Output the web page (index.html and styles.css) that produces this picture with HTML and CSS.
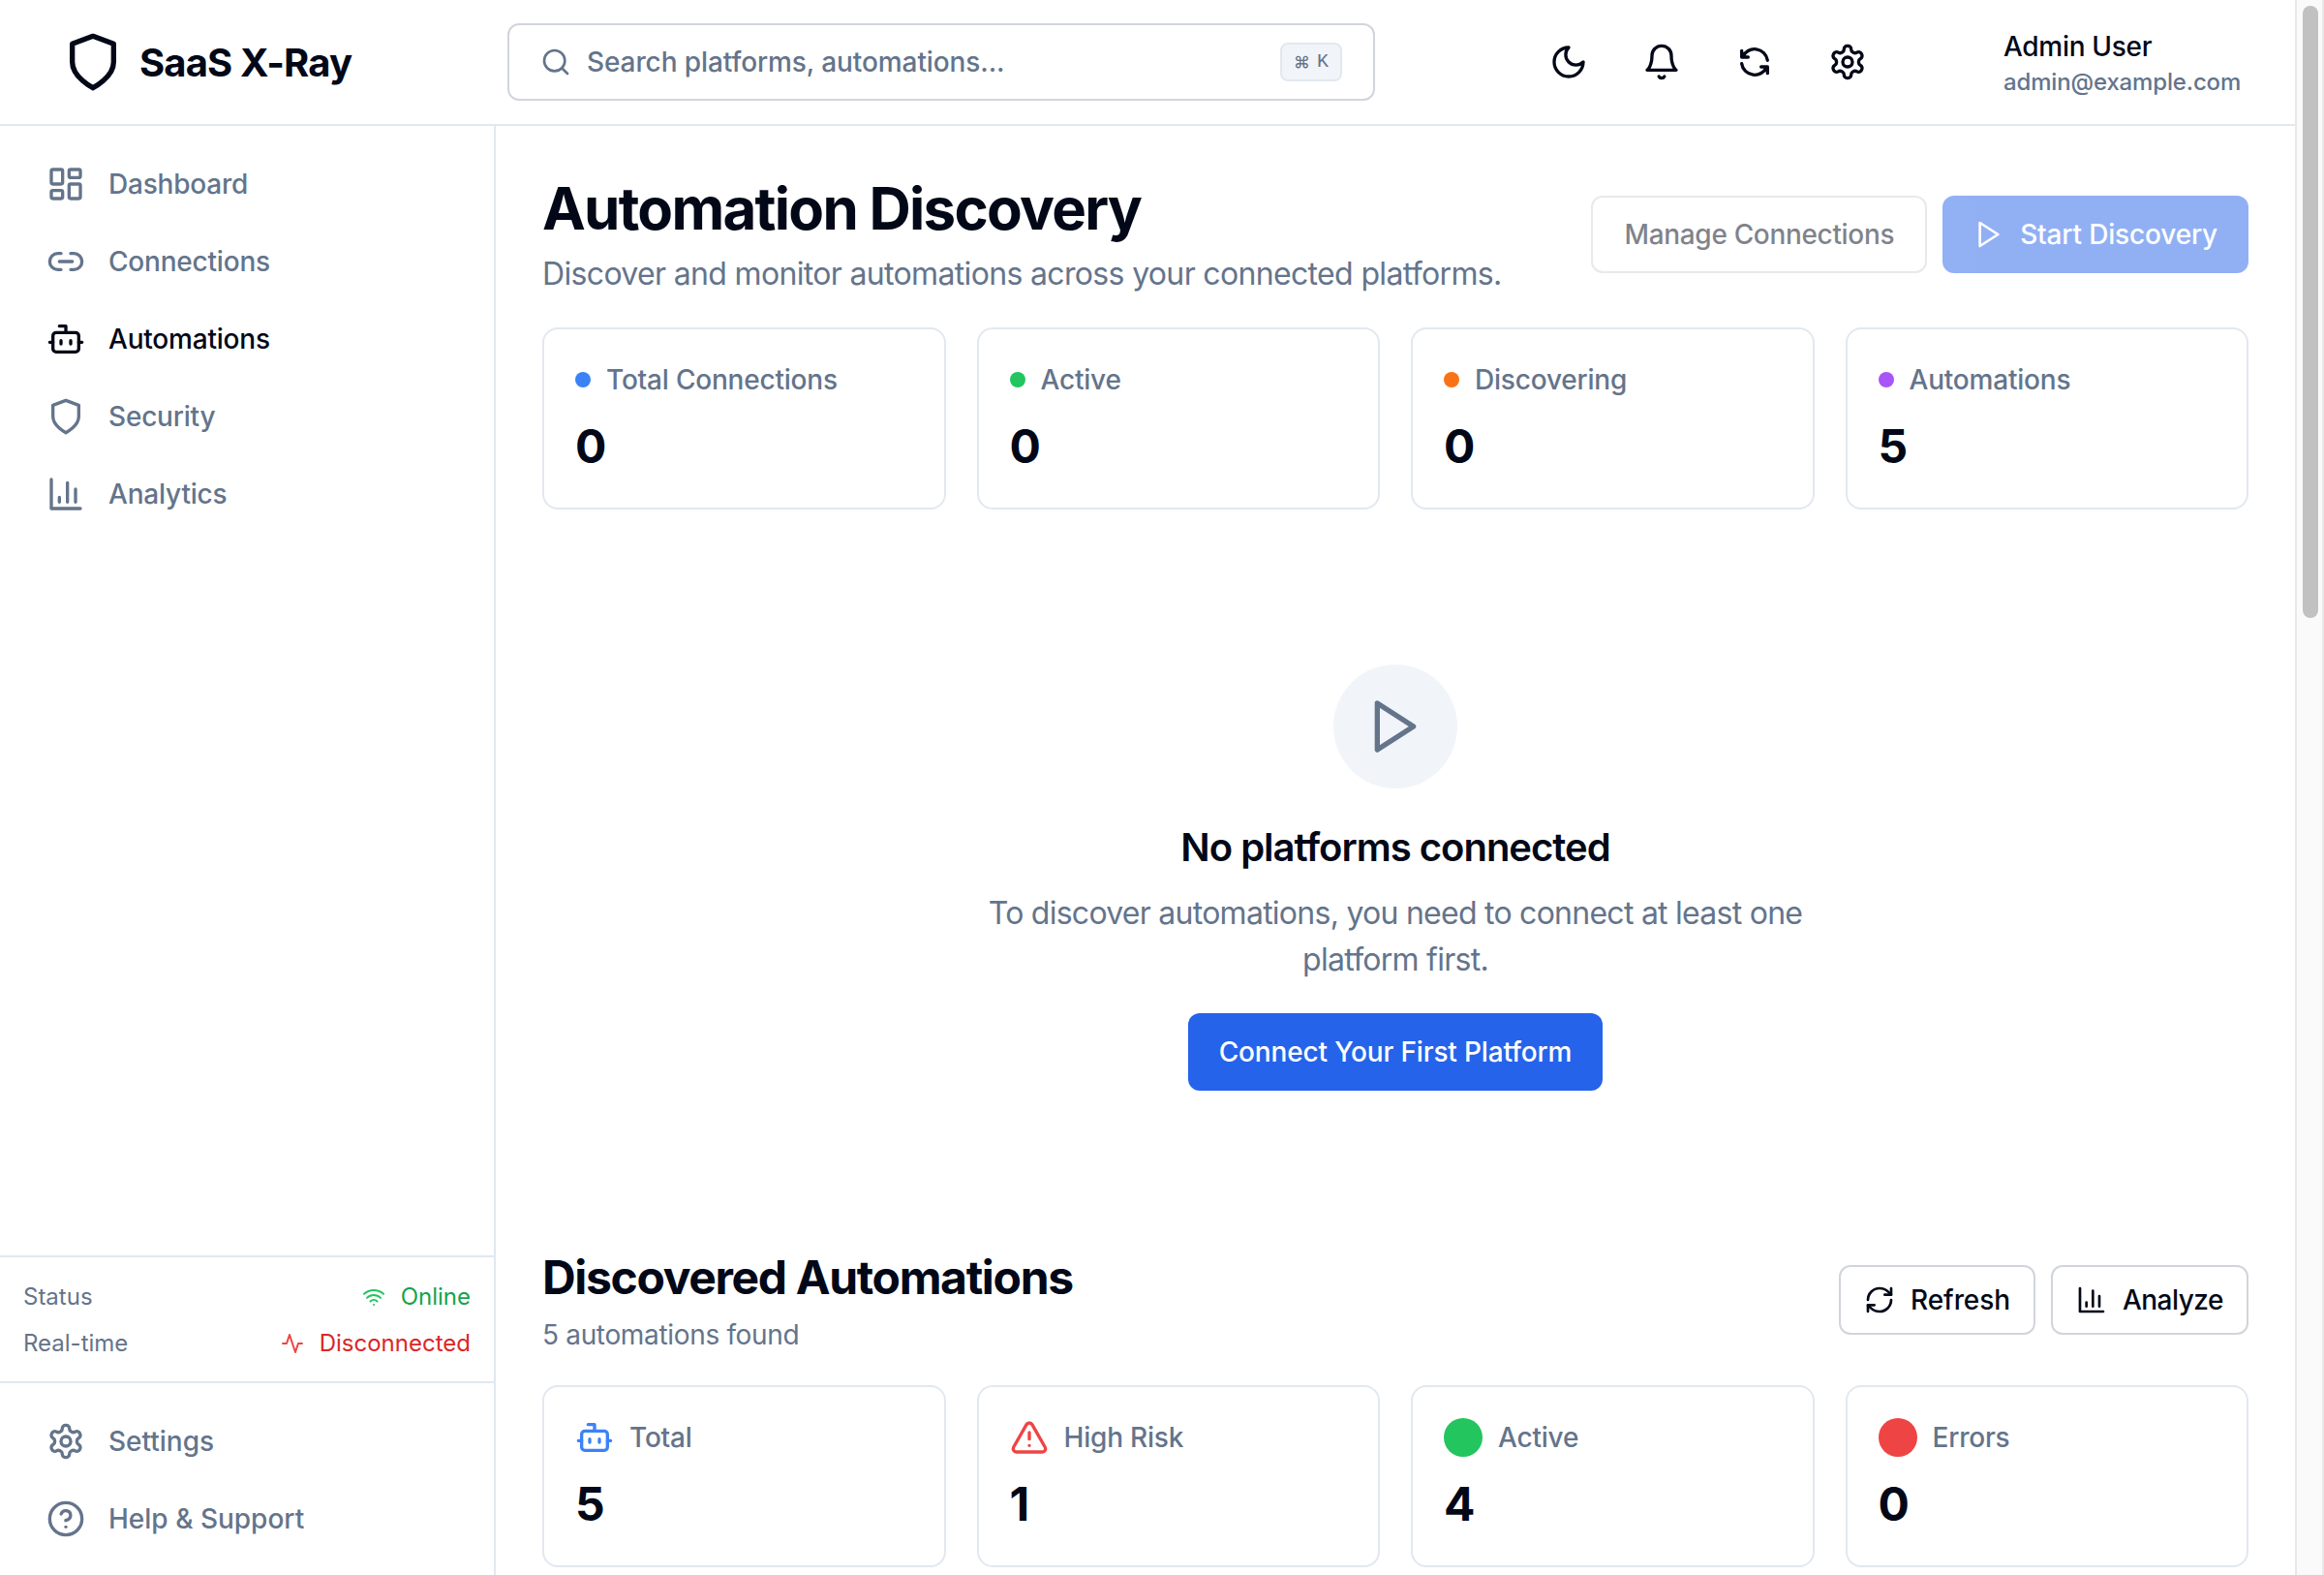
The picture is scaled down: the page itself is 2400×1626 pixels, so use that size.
FILE: index.html
```html
<!DOCTYPE html>
<html lang="en">
<head>
<meta charset="utf-8">
<title>SaaS X-Ray</title>
<link rel="stylesheet" href="styles.css">
</head>
<body>
<svg class="sprite" aria-hidden="true">
  <symbol id="shield" viewBox="0 0 24 24"><path d="M12 22s8-4 8-10V5l-8-3-8 3v7c0 6 8 10 8 10"/></symbol>
  <symbol id="search" viewBox="0 0 24 24"><circle cx="11" cy="11" r="8"/><path d="m21 21-4.3-4.3"/></symbol>
  <symbol id="moon" viewBox="0 0 24 24"><path d="M12 3a6 6 0 0 0 9 9 9 9 0 1 1-9-9Z"/></symbol>
  <symbol id="bell" viewBox="0 0 24 24"><path d="M6 8a6 6 0 0 1 12 0c0 7 3 9 3 9H3s3-2 3-9"/><path d="M10.3 21a1.94 1.94 0 0 0 3.4 0"/></symbol>
  <symbol id="sync" viewBox="0 0 24 24"><path d="M20 11A8.1 8.1 0 0 0 4.5 9M4 5v4h4"/><path d="M4 13a8.1 8.1 0 0 0 15.5 2m.5 4v-4h-4"/></symbol>
  <symbol id="refresh-cw" viewBox="0 0 24 24"><path d="M3 12a9 9 0 0 1 9-9 9.75 9.75 0 0 1 6.74 2.74L21 8"/><path d="M21 3v5h-5"/><path d="M21 12a9 9 0 0 1-9 9 9.75 9.75 0 0 1-6.74-2.74L3 16"/><path d="M8 16H3v5"/></symbol>
  <symbol id="settings" viewBox="0 0 24 24"><path d="M12.22 2h-.44a2 2 0 0 0-2 2v.18a2 2 0 0 1-1 1.73l-.43.25a2 2 0 0 1-2 0l-.15-.08a2 2 0 0 0-2.73.73l-.22.38a2 2 0 0 0 .73 2.73l.15.1a2 2 0 0 1 1 1.72v.51a2 2 0 0 1-1 1.74l-.15.09a2 2 0 0 0-.73 2.73l.22.38a2 2 0 0 0 2.73.73l.15-.08a2 2 0 0 1 2 0l.43.25a2 2 0 0 1 1 1.73V20a2 2 0 0 0 2 2h.44a2 2 0 0 0 2-2v-.18a2 2 0 0 1 1-1.73l.43-.25a2 2 0 0 1 2 0l.15.08a2 2 0 0 0 2.73-.73l.22-.39a2 2 0 0 0-.73-2.73l-.15-.08a2 2 0 0 1-1-1.74v-.5a2 2 0 0 1 1-1.74l.15-.09a2 2 0 0 0 .73-2.73l-.22-.38a2 2 0 0 0-2.73-.73l-.15.08a2 2 0 0 1-2 0l-.43-.25a2 2 0 0 1-1-1.73V4a2 2 0 0 0-2-2z"/><circle cx="12" cy="12" r="3"/></symbol>
  <symbol id="dashboard" viewBox="0 0 24 24"><rect width="7" height="9" x="3" y="3" rx="1"/><rect width="7" height="5" x="14" y="3" rx="1"/><rect width="7" height="9" x="14" y="12" rx="1"/><rect width="7" height="5" x="3" y="16" rx="1"/></symbol>
  <symbol id="link" viewBox="0 0 24 24"><path d="M9 17H7A5 5 0 0 1 7 7h2"/><path d="M15 7h2a5 5 0 1 1 0 10h-2"/><path d="M8 12h8"/></symbol>
  <symbol id="bot" viewBox="0 0 24 24"><path d="M12 8V4H8"/><rect width="16" height="12" x="4" y="8" rx="2"/><path d="M2 14h2M20 14h2M15 13v2M9 13v2"/></symbol>
  <symbol id="chart" viewBox="0 0 24 24"><path d="M3 3v18h18"/><path d="M18 17V9M13 17V5M8 17v-3"/></symbol>
  <symbol id="help" viewBox="0 0 24 24"><circle cx="12" cy="12" r="10"/><path d="M9.09 9a3 3 0 0 1 5.83 1c0 2-3 3-3 3"/><path d="M12 17h.01"/></symbol>
  <symbol id="wifi" viewBox="0 0 24 24"><path d="M12 20h.01M2 8.82a15 15 0 0 1 20 0M5 12.859a10 10 0 0 1 14 0M8.5 16.429a5 5 0 0 1 7 0"/></symbol>
  <symbol id="activity" viewBox="0 0 24 24"><path d="M22 12h-4l-3 9L9 3l-3 9H2"/></symbol>
  <symbol id="play" viewBox="0 0 24 24"><path d="m5 3 14 9-14 9V3z"/></symbol>
  <symbol id="warning" viewBox="0 0 24 24"><path d="m21.73 18-8-14a2 2 0 0 0-3.48 0l-8 14A2 2 0 0 0 4 21h16a2 2 0 0 0 1.73-3Z"/><path d="M12 9v4M12 17h.01"/></symbol>
</svg>
<div class="page">
  <div class="app">
    <header class="header">
      <div class="brand"><svg class="icon icon-xl"><use href="#shield"/></svg><span class="brand-name">SaaS X-Ray</span></div>
      <div class="search">
        <svg class="icon icon-sm"><use href="#search"/></svg>
        <span class="search-text">Search platforms, automations...</span>
        <kbd class="kbd"><span class="cmd">⌘</span><span>K</span></kbd>
      </div>
      <div class="actions">
        <button class="icon-btn" aria-label="Theme"><svg class="icon"><use href="#moon"/></svg></button>
        <button class="icon-btn" aria-label="Notifications"><svg class="icon"><use href="#bell"/></svg></button>
        <button class="icon-btn" aria-label="Sync"><svg class="icon"><use href="#sync"/></svg></button>
        <button class="icon-btn" aria-label="Settings"><svg class="icon"><use href="#settings"/></svg></button>
      </div>
      <div class="user"><span class="user-name">Admin User</span><span class="user-mail">admin@example.com</span></div>
    </header>
    <div class="body">
      <aside class="sidebar">
        <nav class="nav nav-main">
          <a class="nav-item"><svg class="icon"><use href="#dashboard"/></svg>Dashboard</a>
          <a class="nav-item"><svg class="icon"><use href="#link"/></svg>Connections</a>
          <a class="nav-item active"><svg class="icon"><use href="#bot"/></svg>Automations</a>
          <a class="nav-item"><svg class="icon"><use href="#shield"/></svg>Security</a>
          <a class="nav-item"><svg class="icon"><use href="#chart"/></svg>Analytics</a>
        </nav>
        <div class="status">
          <div class="status-row"><span>Status</span><span class="state online"><svg class="icon icon-xs"><use href="#wifi"/></svg>Online</span></div>
          <div class="status-row"><span>Real-time</span><span class="state offline"><svg class="icon icon-xs"><use href="#activity"/></svg>Disconnected</span></div>
        </div>
        <nav class="nav nav-foot">
          <a class="nav-item"><svg class="icon"><use href="#settings"/></svg>Settings</a>
          <a class="nav-item"><svg class="icon"><use href="#help"/></svg>Help &amp; Support</a>
        </nav>
      </aside>
      <main class="main">
        <section class="heading">
          <div class="heading-text"><h1>Automation Discovery</h1><p class="lead">Discover and monitor automations across your connected platforms.</p></div>
          <div class="buttons">
            <button class="btn btn-outline btn-manage disabled">Manage Connections</button>
            <button class="btn btn-primary disabled"><svg class="icon icon-sm"><use href="#play"/></svg>Start Discovery</button>
          </div>
        </section>
        <section class="cards">
          <div class="card"><div class="label"><i class="dot blue"></i>Total Connections</div><div class="value">0</div></div>
          <div class="card"><div class="label"><i class="dot green"></i>Active</div><div class="value">0</div></div>
          <div class="card"><div class="label"><i class="dot orange"></i>Discovering</div><div class="value">0</div></div>
          <div class="card"><div class="label"><i class="dot purple"></i>Automations</div><div class="value">5</div></div>
        </section>
        <section class="empty">
          <div class="empty-icon"><svg class="icon icon-xl"><use href="#play"/></svg></div>
          <h3>No platforms connected</h3>
          <p>To discover automations, you need to connect at least one platform first.</p>
          <button class="btn btn-primary">Connect Your First Platform</button>
        </section>
        <section class="heading">
          <div class="heading-text"><h2>Discovered Automations</h2><p class="count">5 automations found</p></div>
          <div class="buttons">
            <button class="btn btn-outline btn-sm btn-refresh"><svg class="icon icon-sm"><use href="#refresh-cw"/></svg>Refresh</button>
            <button class="btn btn-outline btn-sm btn-analyze"><svg class="icon icon-sm"><use href="#chart"/></svg>Analyze</button>
          </div>
        </section>
        <section class="cards">
          <div class="card"><div class="label"><svg class="icon c-blue"><use href="#bot"/></svg>Total</div><div class="value">5</div></div>
          <div class="card"><div class="label"><svg class="icon c-red"><use href="#warning"/></svg>High Risk</div><div class="value">1</div></div>
          <div class="card"><div class="label"><i class="dot big green"></i>Active</div><div class="value">4</div></div>
          <div class="card"><div class="label"><i class="dot big red"></i>Errors</div><div class="value">0</div></div>
        </section>
      </main>
    </div>
  </div>
  <div class="scrollbar"><div class="thumb"></div></div>
</div>
</body>
</html>
```

FILE: styles.css
```css
* { box-sizing: border-box; margin: 0; padding: 0; }
body {
  height: 1626px;
  overflow: hidden;
  background: #fff;
  color: #020817;
  font: 400 28px/40px Inter, "Liberation Sans", sans-serif;
}
button { font: inherit; color: inherit; background: none; border: 0; }
.sprite { display: none; }
.icon {
  width: 40px; height: 40px; flex: none;
  fill: none; stroke: currentColor; stroke-width: 2;
  stroke-linecap: round; stroke-linejoin: round;
}
.icon-xs { width: 24px; height: 24px; }
.icon-sm { width: 32px; height: 32px; }
.icon-xl { width: 64px; height: 64px; }

.page { display: flex; height: 1626px; }
.app { flex: 1; min-width: 0; display: flex; flex-direction: column; }

.header {
  display: flex; align-items: center; flex: none;
  height: 130px; padding-left: 64px;
  border-bottom: 2px solid #e2e8f0;
}
.brand { display: flex; align-items: center; gap: 16px; width: 460px; }
.brand-name { padding-top: 2px; font-size: 40px; line-height: 56px; font-weight: 700; letter-spacing: -.85px; }
.search {
  display: flex; align-items: center; gap: 16px;
  width: 896px; height: 80px; padding: 0 32px;
  border: 2px solid #d1d5db; border-radius: 12px;
  color: #64748b; font-weight: 500; letter-spacing: -.1px;
}
.search-text { flex: 1; }
.kbd {
  display: flex; align-items: center; justify-content: space-between;
  width: 64px; height: 40px; padding: 0 12px;
  border: 2px solid #e2e8f0; border-radius: 8px;
  background: #f1f5f9; font: 500 20px/30px "Liberation Mono", monospace;
}
.cmd { font: 500 17px/30px Inter, "Liberation Sans", sans-serif; }
.actions { display: flex; gap: 16px; margin-left: 160px; }
.icon-btn { display: flex; align-items: center; justify-content: center; width: 80px; height: 80px; }
.user { display: flex; flex-direction: column; margin-left: 121px; padding-top: 1px; }
.user-name { font-weight: 500; letter-spacing: -.3px; }
.user-mail { font-size: 24px; line-height: 33px; font-weight: 500; letter-spacing: -.15px; color: #64748b; }

.body { flex: 1; min-height: 0; display: flex; }
.sidebar {
  display: flex; flex-direction: column; flex: none;
  width: 512px; border-right: 2px solid #e2e8f0;
}
.nav { padding: 20px 16px; }
.nav-main { flex: 1; }
.nav-foot { padding-bottom: 18px; }
.nav-item {
  display: flex; align-items: center; gap: 24px;
  height: 80px; padding: 0 32px;
  color: #64748b; font-weight: 500;
}
.nav-main .nav-item { letter-spacing: -.2px; }
.nav-item.active { color: #020817; }
.status {
  display: flex; flex-direction: column; gap: 16px;
  padding: 25px 24px 23px; border: solid #e2e8f0; border-width: 2px 0;
  font-size: 24px; line-height: 32px; color: #64748b;
}
.status-row { display: flex; justify-content: space-between; }
.state { display: flex; align-items: center; gap: 16px; }
.online { color: #16a34a; }
.online .icon { color: #22c55e; }
.offline { color: #dc2626; }
.offline .icon { color: #ef4444; }

.main { flex: 1; min-width: 0; padding: 48px 48px 0; display: flex; flex-direction: column; }
.heading { display: flex; justify-content: space-between; align-items: center; }
.heading-text { display: flex; flex-direction: column; gap: 8px; }
h1 { padding-top: 2px; font-size: 60px; line-height: 70px; font-weight: 700; letter-spacing: -1.73px; }
h2 { padding-top: 2px; font-size: 48px; line-height: 62px; font-weight: 700; letter-spacing: -1.34px; }
h3 { padding-top: 2px; font-size: 40px; line-height: 54px; font-weight: 600; letter-spacing: -1px; }
.lead { padding-top: 2px; font-size: 32px; line-height: 46px; letter-spacing: -.66px; color: #64748b; }
.count { letter-spacing: -.33px; color: #64748b; }
.buttons { display: flex; gap: 16px; }
.btn {
  display: flex; align-items: center; justify-content: center; gap: 16px;
  height: 80px; padding: 0 32px; border-radius: 12px;
  font-weight: 500; letter-spacing: -.16px; white-space: nowrap;
}
.btn-outline { border: 2px solid #d1d5db; }
.btn-primary { background: #2563eb; color: #fff; }
.btn-manage { letter-spacing: -.33px; }
.btn-sm { height: 72px; padding: 0 24px; }
.btn-refresh { letter-spacing: -.1px; }
.btn-analyze { letter-spacing: -.5px; }
.disabled { opacity: .5; }

.cards { display: grid; grid-template-columns: repeat(4, 1fr); gap: 32px; margin-top: 32px; }
.card { height: 188px; padding: 32px; border: 2px solid #e2e8f0; border-radius: 16px; }
.label { display: flex; align-items: center; gap: 16px; color: #64748b; font-weight: 500; letter-spacing: -.2px; }
.value { margin-top: 17px; font-size: 48px; line-height: 64px; font-weight: 700; }
.dot { width: 16px; height: 16px; border-radius: 50%; }
.dot.big { width: 40px; height: 40px; }
.blue { background: #3b82f6; }
.green { background: #22c55e; }
.orange { background: #f97316; }
.purple { background: #a855f7; }
.red { background: #ef4444; }
.c-blue { color: #3b82f6; }
.c-red { color: #ef4444; }

.empty {
  display: flex; flex-direction: column; align-items: center;
  padding: 160px 0; text-align: center;
}
.empty-icon {
  display: flex; align-items: center; justify-content: center;
  width: 128px; height: 128px; border-radius: 50%;
  background: #f1f5f9; color: #64748b;
}
.empty h3 { margin-top: 32px; }
.empty p { width: 896px; margin: 17px 0 31px; font-size: 32px; line-height: 48px; letter-spacing: -.74px; color: #64748b; }

.scrollbar {
  flex: none; width: 30px; padding: 6px 4px 0 6px;
  background: #fafafa; border: solid #e8e8e8; border-width: 0 2px;
}
.thumb { width: 16px; height: 632px; border-radius: 8px; background: #c1c1c1; }
```
